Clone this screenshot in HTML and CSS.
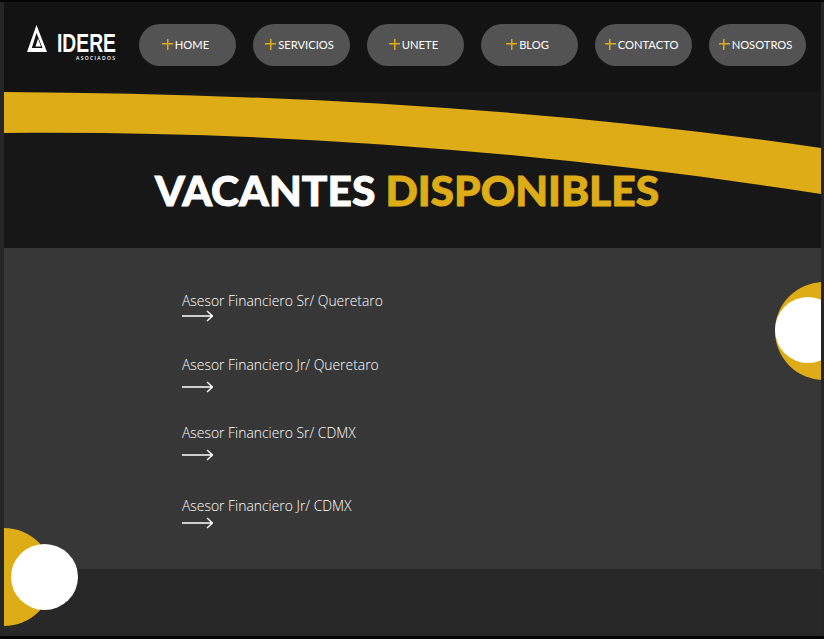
FILE: index.html
```html
<!DOCTYPE html>
<html lang="es">
<head>
    <meta charset="UTF-8">
    <meta name="viewport" content="width=device-width, initial-scale=1.0">
    <title>Lidere Asociados - Vacantes</title>
    <link rel="stylesheet" href="styles.css">
</head>
<body>
    <div class="page">
        <header class="top">
            <a class="logo" href="#">
                <svg width="112" height="36" viewBox="0 0 112 36">
                    <path d="M9.5 0 L20 27 L0 27 Z M9.5 8 L4.8 23 L15.5 23 Z" fill="#fff" fill-rule="evenodd"/>
                    <path d="M11 13.5 L14 21.5 L8.5 21.5 Z" fill="#fff"/>
                    <text class="logo-name" x="30" y="27" textLength="59" lengthAdjust="spacingAndGlyphs">IDERE</text>
                    <text class="logo-sub" x="49" y="35" textLength="39" lengthAdjust="spacing">ASOCIADOS</text>
                </svg>
            </a>
            <nav class="menu">
                <a class="pill" href="#"><span class="plus"></span>HOME</a>
                <a class="pill" href="#"><span class="plus"></span>SERVICIOS</a>
                <a class="pill" href="#"><span class="plus"></span>UNETE</a>
                <a class="pill" href="#"><span class="plus"></span>BLOG</a>
                <a class="pill" href="#"><span class="plus"></span>CONTACTO</a>
                <a class="pill" href="#"><span class="plus"></span>NOSOTROS</a>
            </nav>
        </header>

        <section class="hero">
            <svg class="band" width="817" height="102" viewBox="0 0 817 102">
                <path d="M0 0 C 272 2 545 16 817 56 L817 102 C 545 60 272 38 0 41 Z" fill="#deac17"/>
            </svg>
            <h1>VACANTES <span class="gold">DISPONIBLES</span></h1>
        </section>

        <section class="jobs">
            <span class="dot dot-right"></span>
            <span class="dot dot-left"></span>
            <ul class="job-list">
                <li class="job">
                    <a href="#">Asesor Financiero Sr/ Queretaro</a>
                    <svg class="arrow" width="31" height="12" viewBox="0 0 31 12"><path d="M0 6 H30 M25 1 L30.5 6 L25 11" fill="none" stroke="#fff" stroke-width="1.4"/></svg>
                </li>
                <li class="job">
                    <a href="#">Asesor Financiero Jr/ Queretaro</a>
                    <svg class="arrow" width="31" height="12" viewBox="0 0 31 12"><path d="M0 6 H30 M25 1 L30.5 6 L25 11" fill="none" stroke="#fff" stroke-width="1.4"/></svg>
                </li>
                <li class="job">
                    <a href="#">Asesor Financiero Sr/ CDMX</a>
                    <svg class="arrow" width="31" height="12" viewBox="0 0 31 12"><path d="M0 6 H30 M25 1 L30.5 6 L25 11" fill="none" stroke="#fff" stroke-width="1.4"/></svg>
                </li>
                <li class="job">
                    <a href="#">Asesor Financiero Jr/ CDMX</a>
                    <svg class="arrow" width="31" height="12" viewBox="0 0 31 12"><path d="M0 6 H30 M25 1 L30.5 6 L25 11" fill="none" stroke="#fff" stroke-width="1.4"/></svg>
                </li>
            </ul>
        </section>

        <footer class="bottom"></footer>
    </div>
</body>
</html>
```

FILE: styles.css
```css
body {
    margin: 0;
    padding: 0 3px 0 4px;
    box-sizing: border-box;
    height: 639px;
    overflow: hidden;
    background-color: #262626;
    border-top: 2px solid #050505;
    border-bottom: 3px solid #050505;
    font-family: "Open Sans", Arial, sans-serif;
}
a {
    color: inherit;
    text-decoration: none;
}
.page {
    height: 100%;
    display: flex;
    flex-direction: column;
    background-color: #171717;
    overflow: hidden;
}

/* top bar */
.top {
    display: flex;
    align-items: flex-start;
    height: 90px;
    padding: 22px 15px 0 23px;
    box-sizing: border-box;
    flex-shrink: 0;
    background-color: #131313;
}
.logo {
    display: block;
    width: 112px;
    height: 36px;
    margin-top: 1px;
    flex-shrink: 0;
}
.logo svg {
    display: block;
}
.logo-name {
    font-family: "Liberation Sans", Arial, sans-serif;
    font-weight: 700;
    font-size: 26.5px;
    fill: white;
}
.logo-sub {
    font-family: "Open Sans", Arial, sans-serif;
    font-weight: 600;
    font-size: 5px;
    fill: white;
}
.menu {
    display: flex;
    justify-content: space-between;
    flex-grow: 1;
}
.pill {
    width: 97px;
    height: 42px;
    box-sizing: border-box;
    padding: 0 4px 2px 0;
    border-radius: 21px;
    background-color: #535353;
    color: #fff;
    font-family: Lato, Arial, sans-serif;
    font-size: 11.2px;
    display: flex;
    align-items: center;
    justify-content: center;
    gap: 2px;
}
.plus {
    width: 11px;
    height: 11px;
    background:
        linear-gradient(#deac17, #deac17) center / 100% 1.5px no-repeat,
        linear-gradient(#deac17, #deac17) center / 1.5px 100% no-repeat;
}

/* title and yellow band */
.hero {
    height: 156px;
    flex-shrink: 0;
    position: relative;
    display: flex;
    justify-content: center;
}
.band {
    position: absolute;
    left: 0;
    top: 0;
}
h1 {
    position: relative;
    margin: 73px 0 0 -11px;
    font-family: Lato, Arial, sans-serif;
    font-weight: 900;
    font-size: 42.5px;
    line-height: 50px;
    -webkit-text-stroke: 0.9px currentColor;
    color: white;
}
.gold {
    color: #deac17;
}

/* vacancies */
.jobs {
    height: 321px;
    flex-shrink: 0;
    background-color: #373737;
    position: relative;
    box-sizing: border-box;
    padding: 43px 0 0 178px;
}
.job-list {
    list-style: none;
    margin: 0;
    padding: 0;
}
.job {
    color: white;
    font-size: 13.9px;
    font-weight: 300;
    line-height: 20px;
}
.job a {
    display: block;
}
.arrow {
    display: block;
}
.job:nth-child(1) .arrow {
    margin-top: -1px;
}
.job:nth-child(2) .arrow,
.job:nth-child(3) .arrow {
    margin-top: 6px;
}
.job:nth-child(4) .arrow {
    margin-top: 1px;
}
.job:nth-child(1) {
    margin-bottom: 33px;
}
.job:nth-child(2) {
    margin-bottom: 30px;
}
.job:nth-child(3) {
    margin-bottom: 35px;
}
.dot {
    position: absolute;
    border-radius: 50%;
}
.dot::after {
    content: "";
    position: absolute;
    border-radius: 50%;
    background-color: white;
}
.dot-right {
    width: 98px;
    height: 98px;
    right: -52px;
    top: 34px;
    background-color: #deac17;
}
.dot-right::after {
    left: 0;
    top: 15px;
    width: 66px;
    height: 66px;
}
.dot-left {
    width: 98px;
    height: 98px;
    left: -49px;
    top: 280px;
    background-color: #deac17;
}
.dot-left::after {
    left: 56px;
    top: 16px;
    width: 67px;
    height: 66px;
}

.bottom {
    flex-grow: 1;
    background-color: #282828;
}
```
